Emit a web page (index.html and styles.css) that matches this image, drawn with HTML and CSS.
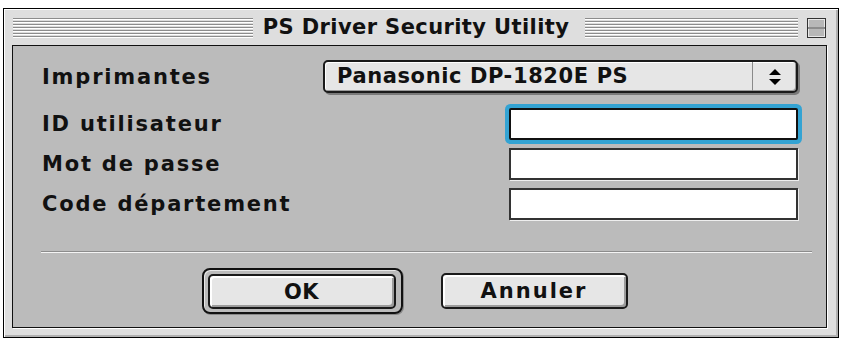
FILE: index.html
```html
<!DOCTYPE html>
<html lang="fr">
<head>
    <meta charset="UTF-8">
    <meta name="viewport" content="width=device-width, initial-scale=1.0">
    <title>PS Driver Security Utility</title>
    <link rel="stylesheet" href="styles.css">
</head>
<body>
    <div class="window">
        <div class="titlebar">
            <div class="stripes left"></div>
            <div class="title">PS Driver Security Utility</div>
            <div class="stripes"></div>
            <div class="shade">
                <svg width="19" height="20" viewBox="0 0 19 20">
                    <rect x="0.5" y="0.5" width="18" height="19" fill="#e8e8e8" stroke="#333"/>
                    <rect x="2" y="2" width="15" height="7" fill="#b8b8b8"/>
                    <rect x="2" y="11" width="15" height="7" fill="#b8b8b8"/>
                    <line x1="1" y1="10" x2="18" y2="10" stroke="#333"/>
                </svg>
            </div>
        </div>
        <div class="content">
            <div class="row first">
                <span class="label">Imprimantes</span>
                <div class="popup">
                    <span class="popup-text">Panasonic DP-1820E PS</span>
                    <span class="popup-arrows">
                        <svg width="12" height="16" viewBox="0 0 12 16">
                            <polygon points="6,0 12,6 0,6" fill="#000"/>
                            <polygon points="0,10 12,10 6,16" fill="#000"/>
                        </svg>
                    </span>
                </div>
            </div>
            <div class="row">
                <span class="label">ID utilisateur</span>
                <input type="text" class="field focused" id="userId">
            </div>
            <div class="row">
                <span class="label">Mot de passe</span>
                <input type="password" class="field" id="password">
            </div>
            <div class="row">
                <span class="label">Code département</span>
                <input type="text" class="field" id="deptCode">
            </div>
            <div class="separator"></div>
            <div class="buttons">
                <div class="default-ring">
                    <button type="button" class="btn ok">OK</button>
                </div>
                <button type="button" class="btn cancel">Annuler</button>
            </div>
        </div>
    </div>
</body>
</html>
```

FILE: styles.css
```css
/* Fenêtre style Mac OS 9 */
* {
    margin: 0;
    padding: 0;
    box-sizing: border-box;
}
body {
    background-color: #fff;
    font-family: "DejaVu Sans", Verdana, sans-serif;
    font-weight: bold;
    color: #111;
}
.window {
    width: 836px;
    height: 330px;
    margin: 8px 0 0 3px;
    background-color: #dedede;
    border: 1px solid #000;
    box-shadow: inset 1px 1px 0 #fff, inset -2px -2px 0 #b0b0b0;
    padding: 0 11px 9px 8px;
    display: flex;
    flex-direction: column;
}
.titlebar {
    height: 36px;
    display: flex;
    align-items: center;
    padding-left: 1px;
}
.stripes {
    flex: 1 1 0;
    height: 20px;
    margin-top: 2px;
    background: repeating-linear-gradient(to bottom, #8c8c8c 0, #8c8c8c 1px, #fff 1px, #fff 2px, #dcdcdc 2px, #dcdcdc 3px);
}
.stripes.left {
    flex: 1 1 27px;
}
.title {
    font-size: 21px;
    letter-spacing: 0.4px;
    padding: 0 16px 0 10px;
    white-space: nowrap;
}
.shade {
    margin-left: 9px;
    margin-right: 1px;
    height: 20px;
    margin-top: 2px;
}
.shade svg {
    display: block;
}
.content {
    flex: 1;
    background-color: #bbbbbb;
    border: 1px solid #111;
    box-shadow: 1px 1px 0 #fff;
    padding: 14px 28px 0 29px;
}
.row {
    display: flex;
    justify-content: space-between;
    align-items: center;
    height: 32px;
    margin-bottom: 8px;
}
.row.first {
    height: 33px;
    margin-bottom: 15px;
}
.label {
    font-size: 21px;
    letter-spacing: 1.8px;
    white-space: nowrap;
}
.popup {
    width: 475px;
    height: 33px;
    display: flex;
    background-color: #e6e6e6;
    border: 2px solid #1a1a1a;
    border-radius: 5px;
    box-shadow: 2px 2px 0 #7a7a7a, inset 1px 1px 0 #fff, inset -1px -1px 0 #9a9a9a;
}
.popup-text {
    flex: 1;
    font-size: 21px;
    letter-spacing: 0.6px;
    padding-left: 12px;
    line-height: 29px;
    white-space: nowrap;
}
.popup-arrows {
    width: 44px;
    border-left: 1px solid #8a8a8a;
    display: flex;
    align-items: center;
    justify-content: center;
}
.popup-arrows svg {
    display: block;
}
.field {
    width: 289px;
    height: 32px;
    background-color: #fff;
    border: 2px solid #333;
    box-shadow: 1px 1px 0 #eee;
    outline: none;
}
.field.focused {
    border-color: #111;
    border-radius: 2px;
    box-shadow: 0 0 0 4px #33a3d3;
}
.separator {
    margin: 31px -14px 0 -1px;
    height: 2px;
    border-top: 1px solid #8c8c8c;
    border-bottom: 1px solid #f4f4f4;
}
.buttons {
    display: flex;
    align-items: center;
    justify-content: center;
    gap: 38px;
    margin-top: 15px;
    padding-right: 11px;
}
.default-ring {
    border: 2px solid #111;
    border-radius: 8px;
    padding: 4px 5px 3px 4px;
    box-shadow: inset 1px 1px 0 #e8e8e8, 1px 1px 0 #888;
}
.btn {
    font-family: "DejaVu Sans", Verdana, sans-serif;
    font-weight: bold;
    font-size: 21px;
    letter-spacing: 0.5px;
    color: #111;
    background-color: #e6e6e6;
    border: 2px solid #1a1a1a;
    border-radius: 5px;
    box-shadow: inset 2px 2px 0 #fff, inset -2px -2px 0 #9c9c9c;
}
.btn.ok {
    display: block;
    width: 188px;
    height: 35px;
}
.btn.cancel {
    width: 187px;
    height: 36px;
    letter-spacing: 2px;
}
```
